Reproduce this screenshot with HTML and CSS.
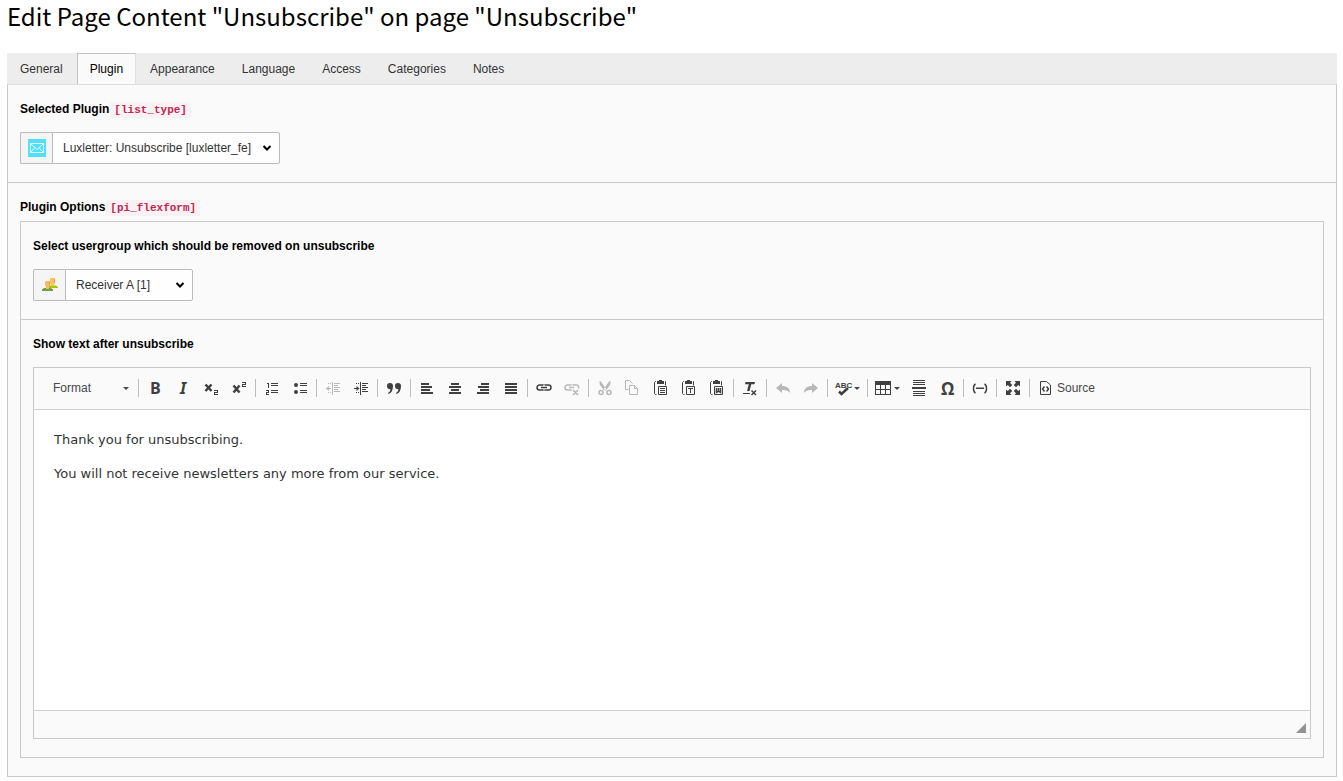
FILE: index.html
```html
<!DOCTYPE html>
<html lang="en">
<head>
<meta charset="utf-8">
<title>Edit Page Content</title>
<link rel="stylesheet" href="styles.css">
</head>
<body>
<main class="module">
  <h1 class="module-title">Edit Page Content "Unsubscribe" on page "Unsubscribe"</h1>

  <div class="tabs" role="tablist">
    <button class="tab" role="tab" type="button">General</button>
    <button class="tab tab-active" role="tab" type="button" aria-selected="true">Plugin</button>
    <button class="tab" role="tab" type="button">Appearance</button>
    <button class="tab" role="tab" type="button">Language</button>
    <button class="tab" role="tab" type="button">Access</button>
    <button class="tab" role="tab" type="button">Categories</button>
    <button class="tab" role="tab" type="button">Notes</button>
  </div>

  <div class="panel">
    <section class="section">
      <label class="field-label" for="list-type">Selected Plugin<code class="field-code">[list_type]</code></label>
      <div class="select-group">
        <span class="addon">
          <svg class="addon-icon-large" viewBox="0 0 18 18" aria-hidden="true">
            <path fill="#4de1fb" d="M0 0h18v18H0z"/>
            <path fill="none" stroke="#e9fbff" d="M2.500 4.500h13v9h-13zM2.500 4.500l6.500 6 6.500-6M2.500 13.500l4.500-5M15.500 13.500l-4.500-5"/>
          </svg>
        </span>
        <select class="select" id="list-type"><option>Luxletter: Unsubscribe [luxletter_fe]</option></select>
        <svg class="chevron" viewBox="0 0 10 8" aria-hidden="true"><path d="M1.500 2L5 5.500 8.500 2"/></svg>
      </div>
    </section>

    <section class="section section-flex">
      <div class="field-label">Plugin Options<code class="field-code">[pi_flexform]</code></div>
      <div class="inner-panel">
        <section class="section">
          <label class="field-label" for="usergroup">Select usergroup which should be removed on unsubscribe</label>
          <div class="select-group">
            <span class="addon">
              <svg class="addon-icon" viewBox="0 0 16 16" aria-hidden="true">
                <path fill="#a4c90c" d="M6 11V9.500l3-1h5l2 1.500v1z"/>
                <path fill="#f9c25d" d="M8 1.500L9 1h3l1 1v4l-1 1v2H9V7L8 6z"/>
                <path fill="#e8a33d" d="M12 1.500l1 .5v4l-1 1z"/>
                <path fill="#6f9f42" d="M0 14v-1.500L2 11h7l2 1.500V14z"/>
                <path fill="#f9b95c" d="M3 5l1-1h3l1 1v3L7 9.500V12H4V9.500L3 8z"/>
                <path fill="#dc9a48" d="M7 4.500L8 5v3L7 9.500z"/>
              </svg>
            </span>
            <select class="select select-small" id="usergroup"><option>Receiver A [1]</option></select>
            <svg class="chevron" viewBox="0 0 10 8" aria-hidden="true"><path d="M1.500 2L5 5.500 8.500 2"/></svg>
          </div>
        </section>

        <section class="section section-editor">
          <div class="field-label" id="rte-label">Show text after unsubscribe</div>
          <div class="editor">
            <div class="toolbar" role="toolbar" aria-label="Editor toolbar">
              <button class="combo" type="button">Format<span class="caret"></span></button>
              <span class="sep"></span>
              <button class="tool" type="button" aria-label="Bold"><svg class="icon" viewBox="0 0 16 16"><text class="glyph-bold" x="3" y="14">B</text></svg></button>
              <button class="tool" type="button" aria-label="Italic"><svg class="icon" viewBox="0 0 16 16"><text class="glyph-italic" x="5" y="14">I</text></svg></button>
              <button class="tool" type="button" aria-label="Subscript"><svg class="icon" viewBox="0 0 16 16"><path class="line-heavy" d="M2.500 4.500l6 6.500M8.500 4.500l-6 6.500"/><path class="line crisp" d="M11 10.500h3.500v2h-3v2H15"/></svg></button>
              <button class="tool" type="button" aria-label="Superscript"><svg class="icon" viewBox="0 0 16 16"><path class="line-heavy" d="M2.500 5.500l6 7M8.500 5.500l-6 7"/><path class="line crisp" d="M11 2.500h3.500v2h-3v2H15"/></svg></button>
              <span class="sep"></span>
              <button class="tool" type="button" aria-label="Numbered list"><svg class="icon" viewBox="0 0 16 16"><path class="line crisp" d="M7 3.500h7M7 5.500h7M7 10.500h7M7 12.500h7M3 3.500h1.500V8M2 10.500h2.500v2h-2v2H5"/></svg></button>
              <button class="tool" type="button" aria-label="Bulleted list"><svg class="icon" viewBox="0 0 16 16"><path class="line crisp" d="M8 3.500h7M8 5.500h7M8 10.500h7M8 12.500h7"/><circle cx="4" cy="5" r="2"/><circle cx="4" cy="12" r="2"/></svg></button>
              <span class="sep"></span>
              <button class="tool" type="button" aria-label="Decrease indent" disabled><svg class="icon" viewBox="0 0 16 16"><path class="line crisp" d="M7.500 2v13M9 3.500h6M9 5.500h4M9 7.500h6M9 9.500h4M9 11.500h6M1 8.500h5M3 3.500h1M5 3.500h1M3 12.500h1M5 12.500h1"/><path d="M1 8.500L4 6v5z"/></svg></button>
              <button class="tool" type="button" aria-label="Increase indent"><svg class="icon" viewBox="0 0 16 16"><path class="line crisp" d="M7.500 2v13M9 3.500h6M9 5.500h4M9 7.500h6M9 9.500h4M9 11.500h6M1 8.500h5M3 3.500h1M5 3.500h1M3 12.500h1M5 12.500h1"/><path d="M6.500 8.500L3.500 6v5z"/></svg></button>
              <span class="sep"></span>
              <button class="tool" type="button" aria-label="Block quote"><svg class="icon" viewBox="0 0 16 16"><path d="M4 3a2.800 2.800 0 0 1 3 3c0 4-1.500 7-4.500 8l-.5-1c1.500-.8 2.300-2 2.400-3.800A2.900 2.900 0 0 1 1 6.200 3 3 0 0 1 4 3zM12 3a2.800 2.800 0 0 1 3 3c0 4-1.500 7-4.500 8l-.5-1c1.500-.8 2.300-2 2.400-3.800A2.900 2.900 0 0 1 9 6.200 3 3 0 0 1 12 3z"/></svg></button>
              <span class="sep"></span>
              <button class="tool" type="button" aria-label="Align left"><svg class="icon" viewBox="0 0 16 16"><path d="M2 3h8v2H2zM2 6h11v2H2zM2 9h9v2H2zM2 12h12v2H2z"/></svg></button>
              <button class="tool" type="button" aria-label="Center"><svg class="icon" viewBox="0 0 16 16"><path d="M4 3h8v2H4zM2 6h12v2H2zM4 9h8v2H4zM2 12h12v2H2z"/></svg></button>
              <button class="tool" type="button" aria-label="Align right"><svg class="icon" viewBox="0 0 16 16"><path d="M6 3h8v2H6zM3 6h11v2H3zM5 9h9v2H5zM2 12h12v2H2z"/></svg></button>
              <button class="tool" type="button" aria-label="Justify"><svg class="icon" viewBox="0 0 16 16"><path d="M2 3h12v2H2zM2 6h12v2H2zM2 9h12v2H2zM2 12h12v2H2z"/></svg></button>
              <span class="sep"></span>
              <button class="tool" type="button" aria-label="Link"><svg class="icon" viewBox="0 0 16 16"><path class="line-mid" d="M7 5.200V5H3.500a2.500 2.500 0 0 0 0 5H7V9.500M9 5.200V5h3.500a2.500 2.500 0 0 1 0 5H9V9.500M5 7.500h6"/></svg></button>
              <button class="tool" type="button" aria-label="Unlink" disabled><svg class="icon" viewBox="0 0 16 16"><path class="line-mid" d="M7 5.200V5H3.500a2.500 2.500 0 0 0 0 5H7V9.500M9 5.200V5h3.500a2.500 2.500 0 0 1 2 3.500M5 7.500h5M9 10l5 5M14 10l-5 5"/></svg></button>
              <span class="sep"></span>
              <button class="tool" type="button" aria-label="Cut" disabled><svg class="icon" viewBox="0 0 16 16"><path d="M2.500 1l1.200.2L9.300 9 7 10.500 2.700 4.500zM13.500 1l-1.200.2L6.700 9 9 10.500l4.300-6z"/><circle class="line-mid" cx="4" cy="12.500" r="2"/><circle class="line-mid" cx="12" cy="12.500" r="2"/></svg></button>
              <button class="tool" type="button" aria-label="Copy" disabled><svg class="icon" viewBox="0 0 16 16"><path class="line" d="M3.500 9.500h-3v-9h4l3 3M4.500 5.500h5l3 3v6h-8zM9.500 5.500v3h3"/></svg></button>
              <button class="tool" type="button" aria-label="Paste"><svg class="icon" viewBox="0 0 16 16"><path d="M4 1h2V0h3v1h2v3H4z"/><path class="line" d="M3 1.500H2.500l-1 1v11l1 1h1M12 1.500h.5v4M5.500 6.500h8v8h-8zM7 8.500h5M7 10.500h5M7 12.500h5"/></svg></button>
              <button class="tool" type="button" aria-label="Paste as plain text"><svg class="icon" viewBox="0 0 16 16"><path d="M4 1h2V0h3v1h2v3H4z"/><path class="line" d="M3 1.500H2.500l-1 1v11l1 1h1M12 1.500h.5v4M5.500 6.500h8v8h-8zM7 8.500h5M9.500 8.500V13"/></svg></button>
              <button class="tool" type="button" aria-label="Paste from Word"><svg class="icon" viewBox="0 0 16 16"><path d="M4 1h2V0h3v1h2v3H4z"/><path class="line" d="M3 1.500H2.500l-1 1v11l1 1h1M12 1.500h.5v4M5.500 6.500h8v8h-8z"/><path class="line-mid" d="M7.500 8v4.300l2-1.300 2 1.300V8M9.500 8v3"/></svg></button>
              <span class="sep"></span>
              <button class="tool" type="button" aria-label="Remove format"><svg class="icon" viewBox="0 0 16 16"><path d="M3.500 2H13l-.6 2.200H9.300L7.500 11H5l1.800-6.800H3zM1 13h7v1H1z"/><path class="line-mid" d="M9.500 10.500l4.500 4.500M14 10.500L9.500 15"/></svg></button>
              <span class="sep"></span>
              <button class="tool" type="button" aria-label="Undo" disabled><svg class="icon" viewBox="0 0 16 16"><path d="M1 8l6-5v3c5 0 8 2.500 8 7-1.500-2.300-4-3.200-8-3v3z"/></svg></button>
              <button class="tool" type="button" aria-label="Redo" disabled><svg class="icon" viewBox="0 0 16 16"><path d="M15 8L9 3v3c-5 0-8 2.500-8 7 1.500-2.300 4-3.200 8-3v3z"/></svg></button>
              <span class="sep"></span>
              <button class="tool tool-menu" type="button" aria-label="Spell check"><svg class="icon" viewBox="0 0 16 16"><text class="glyph-abc" x="0" y="8">ABC</text><path class="line-heavy" d="M4 11.500l2.500 2.500L13 8"/></svg><span class="caret"></span></button>
              <span class="sep"></span>
              <button class="tool tool-menu" type="button" aria-label="Table"><svg class="icon" viewBox="0 0 16 16"><path fill-rule="evenodd" d="M0 1h16v14H0zM1 5v4h4V5zM6 5v4h4V5zM11 5v4h4V5zM1 10v4h4v-4zM6 10v4h4v-4zM11 10v4h4v-4z"/></svg><span class="caret"></span></button>
              <button class="tool" type="button" aria-label="Horizontal line"><svg class="icon" viewBox="0 0 16 16"><path class="line crisp" d="M2 .5h12M2 2.500h12M2 4.500h12M2 11.500h12M2 13.500h12M2 15.500h12"/><path d="M1 7h14v2H1z"/></svg></button>
              <button class="tool" type="button" aria-label="Special character"><svg class="icon" viewBox="0 0 16 16"><text class="glyph-omega" x="2" y="15">Ω</text></svg></button>
              <span class="sep"></span>
              <button class="tool" type="button" aria-label="Soft hyphen"><svg class="icon" viewBox="0 0 16 16"><path class="line-mid" d="M3.500 4Q1.500 5 1.500 8.500t2 4.500M12.500 4q2 1 2 4.500t-2 4.500"/><path d="M4 7.500h8v1.500H4z"/></svg></button>
              <span class="sep"></span>
              <button class="tool" type="button" aria-label="Maximize"><svg class="icon" viewBox="0 0 16 16"><path d="M1 1h5.500L5 2.800 7.300 5 5 7.300 2.800 5 1 6.500zM15 1H9.500L11 2.800 8.700 5 11 7.300 13.200 5 15 6.500zM1 15h5.500L5 13.200 7.300 11 5 8.700 2.800 11 1 9.500zM15 15H9.500l1.500-1.800L8.700 11 11 8.700l2.200 2.300L15 9.500z"/></svg></button>
              <span class="sep"></span>
              <button class="tool tool-text" type="button"><svg class="icon" viewBox="0 0 16 16"><path class="line" d="M2.500 1.500h6l4 3.500v9.500h-10z"/><path class="line-mid" d="M6.500 6.500l-2 2.500 2 2.500M8.500 6.500l2 2.500-2 2.500"/></svg>Source</button>
            </div>
            <div class="content" contenteditable="true" spellcheck="false" role="textbox" aria-labelledby="rte-label">
              <p>Thank you for unsubscribing.</p>
              <p>You will not receive newsletters any more from our service.</p>
            </div>
            <div class="statusbar"><svg class="resizer" viewBox="0 0 10 10" aria-hidden="true"><path d="M10 0v10H0z"/></svg></div>
          </div>
        </section>
      </div>
    </section>
  </div>
</main>
</body>
</html>
```
FILE: styles.css
```css
* { box-sizing: border-box; }

body {
  margin: 0;
  background: #fff;
  color: #000;
  font: 12px/18px "Liberation Sans", Arial, sans-serif;
}

button, select { font: inherit; }

.module { padding: 0 6px 4px 7px; }

.module-title {
  margin: 0;
  padding-bottom: 21px;
  font: 400 24px/32px "Noto Sans CJK SC", sans-serif;
}

.tabs {
  display: flex;
  gap: 1px;
  background: #ededed;
  border-radius: 2px 2px 0 0;
}

.tab {
  padding: 6px 12px;
  border: 1px solid transparent;
  border-bottom: 0;
  background: none;
  color: #333;
  line-height: 18px;
}

.tab-active {
  border-color: #c3c3c3 #e0e0e0 #c3c3c3 #c3c3c3;
  background: #fafafa;
  color: #000;
}

.panel, .inner-panel {
  border: 1px solid #c9c9c9;
  background: #fafafa;
}

.panel { border-top-color: #dedede; }

.section { padding: 15px 12px 18px; }
.section + .section { border-top: 1px solid #c9c9c9; }

.field-label {
  display: block;
  margin-bottom: 14px;
  font-weight: 700;
}

.section-flex > .field-label { margin-bottom: 5px; }

.field-code {
  margin-left: 1px;
  padding: 2px 4px;
  border-radius: 3px;
  background: #f9f2f4;
  color: #c7254e;
  font: 700 11px/12px "Liberation Mono", "Courier New", monospace;
}

.select-group {
  position: relative;
  display: inline-flex;
  vertical-align: top;
  height: 32px;
}

.addon {
  display: flex;
  align-items: center;
  justify-content: center;
  width: 32px;
  border: 1px solid #bbb;
  border-right: 0;
  border-radius: 2px 0 0 2px;
  background: #f5f5f5;
}

.addon-icon { width: 16px; height: 16px; }
.addon-icon-large { width: 18px; height: 18px; }

.select {
  appearance: none;
  padding: 0 27px 0 10px;
  border: 1px solid #bbb;
  border-radius: 0 2px 2px 0;
  background: #fefefe;
  color: #333;
}

.select-small { width: 128px; }

.chevron {
  position: absolute;
  top: 12px;
  right: 8px;
  width: 10px;
  height: 8px;
  fill: none;
  stroke: #000;
  stroke-width: 2px;
  pointer-events: none;
}

.editor {
  border: 1px solid #c9c9c9;
  background: #fff;
}

.toolbar {
  display: flex;
  align-items: center;
  flex-wrap: wrap;
  padding: 6px 8px 7px;
  border-bottom: 1px solid #d1d1d1;
  background: #fafafa;
}

.combo, .tool {
  display: flex;
  align-items: center;
  height: 28px;
  border: 0;
  background: none;
  color: #484848;
}

.combo {
  justify-content: space-between;
  width: 94px;
  padding: 0 7px 0 11px;
}

.tool { padding: 0 6px; }
.tool:disabled { opacity: .35; }
.tool-menu { padding: 0 5px; gap: 3px; }
.tool-text { gap: 3px; }

.caret {
  border: solid transparent;
  border-width: 3px 3px 0;
  border-top-color: #484848;
}

.sep {
  width: 1px;
  height: 18px;
  margin: 0 2px;
  background: #bcbcbc;
}

.icon {
  display: block;
  width: 16px;
  height: 16px;
  overflow: visible;
  fill: #404040;
}

.line, .line-mid, .line-heavy {
  fill: none;
  stroke: #404040;
  stroke-width: 1px;
}

.line-mid { stroke-width: 1.5px; }
.line-heavy { stroke-width: 2.5px; }
.crisp { shape-rendering: crispEdges; }

.glyph-bold { font: 700 16px "Open Sans", sans-serif; }
.glyph-italic { font: italic 700 16px "Noto Sans", sans-serif; }
.glyph-abc { font: 700 8px "Liberation Sans Narrow", "Liberation Sans", sans-serif; }
.glyph-omega { font: 700 17px "Open Sans", sans-serif; }

.content {
  min-height: 300px;
  padding: 19px 20px;
  outline: 0;
  color: #333;
  font: 13px/21px "DejaVu Sans", sans-serif;
}

.content p { margin: 0 0 13px; }

.statusbar {
  display: flex;
  align-items: center;
  justify-content: flex-end;
  height: 28px;
  padding: 6px 4px 0 0;
  border-top: 1px solid #d1d1d1;
  background: #fafafa;
}

.resizer { width: 10px; height: 10px; fill: #929292; }
```
